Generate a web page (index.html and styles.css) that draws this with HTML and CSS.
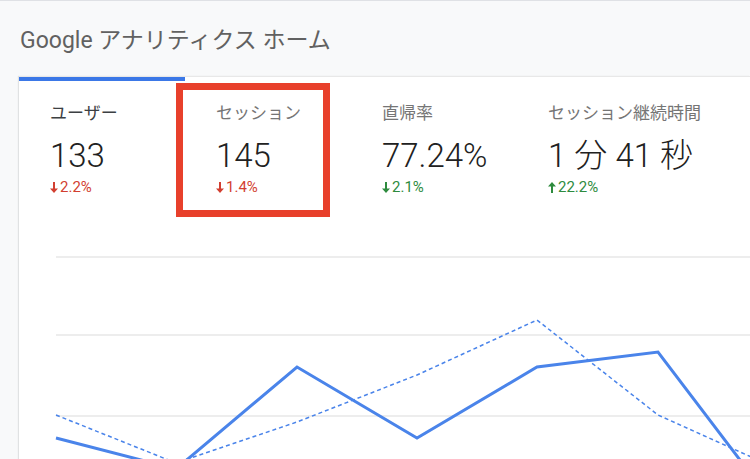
FILE: index.html
```html
<!DOCTYPE html>
<html lang="ja">
<head>
<meta charset="utf-8">
<title>Google アナリティクス ホーム</title>
<link rel="stylesheet" href="styles.css">
</head>
<body>
<header class="header">
  <h1 class="title">Google アナリティクス ホーム</h1>
</header>
<main class="card">
  <div class="tabs">
    <div class="tab tab-active">
      <div class="label">ユーザー</div>
      <div class="value">133</div>
      <div class="change down-red"><svg class="arrow" width="8" height="11" viewBox="0 0 8 11"><path d="M3 0h2v6.5h3L4 11 0 6.5h3z"/></svg>2.2%</div>
    </div>
    <div class="tab">
      <div class="label">セッション</div>
      <div class="value">145</div>
      <div class="change down-red"><svg class="arrow" width="8" height="11" viewBox="0 0 8 11"><path d="M3 0h2v6.5h3L4 11 0 6.5h3z"/></svg>1.4%</div>
    </div>
    <div class="tab">
      <div class="label">直帰率</div>
      <div class="value">77.24%</div>
      <div class="change good"><svg class="arrow" width="8" height="11" viewBox="0 0 8 11"><path d="M3 0h2v6.5h3L4 11 0 6.5h3z"/></svg>2.1%</div>
    </div>
    <div class="tab">
      <div class="label">セッション継続時間</div>
      <div class="value">1 分 41 秒</div>
      <div class="change good"><svg class="arrow" width="8" height="11" viewBox="0 0 8 11"><path d="M3 11h2V4.5h3L4 0 0 4.5h3z"/></svg>22.2%</div>
    </div>
    <div class="highlight"></div>
  </div>
  <svg class="chart" width="731" height="229" viewBox="0 0 731 229">
    <g class="grid">
      <line x1="37" y1="27" x2="731" y2="27"/>
      <line x1="37" y1="105" x2="731" y2="105"/>
      <line x1="37" y1="186" x2="731" y2="186"/>
    </g>
    <polyline class="prev" points="37,185 157,233 278,192 398,145 518,90 639,185 759,239"/>
    <polyline class="cur" points="37,208 157,239 278,137 398,208 518,137 639,122 759,280"/>
  </svg>
</main>
</body>
</html>
```
FILE: styles.css
```css
html, body {
  margin: 0;
  padding: 0;
}
body {
  width: 750px;
  height: 459px;
  overflow: hidden;
  background: #f8f9fa;
  border-top: 1px solid #dfe1e5;
  box-sizing: border-box;
  font-family: Roboto, "Noto Sans CJK JP", sans-serif;
}
.header {
  height: 75px;
  box-sizing: border-box;
  padding: 25px 0 0 20px;
}
.title {
  margin: 0;
  font-size: 23px;
  line-height: 30px;
  font-weight: 400;
  color: #616161;
}
.card {
  margin-left: 19px;
  background: #fff;
  border-top: 1px solid #e8e8e8;
  box-shadow: -1px 0 1px rgba(60, 64, 67, 0.12);
  height: 400px;
}
.tabs {
  position: relative;
  display: flex;
  padding-bottom: 33px;
}
.tab {
  width: 166px;
  box-sizing: border-box;
  padding: 20px 0 0 31px;
  border-top: 4px solid transparent;
}
.tab-active {
  border-top-color: #3b78e7;
}
.label {
  font-size: 17px;
  line-height: 24px;
  color: #757575;
  white-space: nowrap;
}
.tab-active .label {
  color: #3c4043;
}
.value {
  margin-top: 11px;
  font-size: 33px;
  line-height: 40px;
  font-weight: 300;
  color: #212121;
  white-space: nowrap;
}
.change {
  margin-top: 1px;
  font-size: 15px;
  line-height: 20px;
  white-space: nowrap;
}
.arrow {
  fill: currentColor;
  margin-right: 2px;
  vertical-align: -1px;
}
.down-red {
  color: #d23f31;
}
.good {
  color: #2e8b3e;
}
.highlight {
  position: absolute;
  left: 157px;
  top: 6px;
  width: 154px;
  height: 134px;
  box-sizing: border-box;
  border: 7px solid #e8402b;
}
.chart {
  display: block;
}
.grid line {
  stroke: #ededed;
  stroke-width: 2;
}
.cur {
  fill: none;
  stroke: #4a84ea;
  stroke-width: 3;
  stroke-linejoin: miter;
}
.prev {
  fill: none;
  stroke: #4a84ea;
  stroke-width: 1.5;
  stroke-dasharray: 4 3;
}
```
